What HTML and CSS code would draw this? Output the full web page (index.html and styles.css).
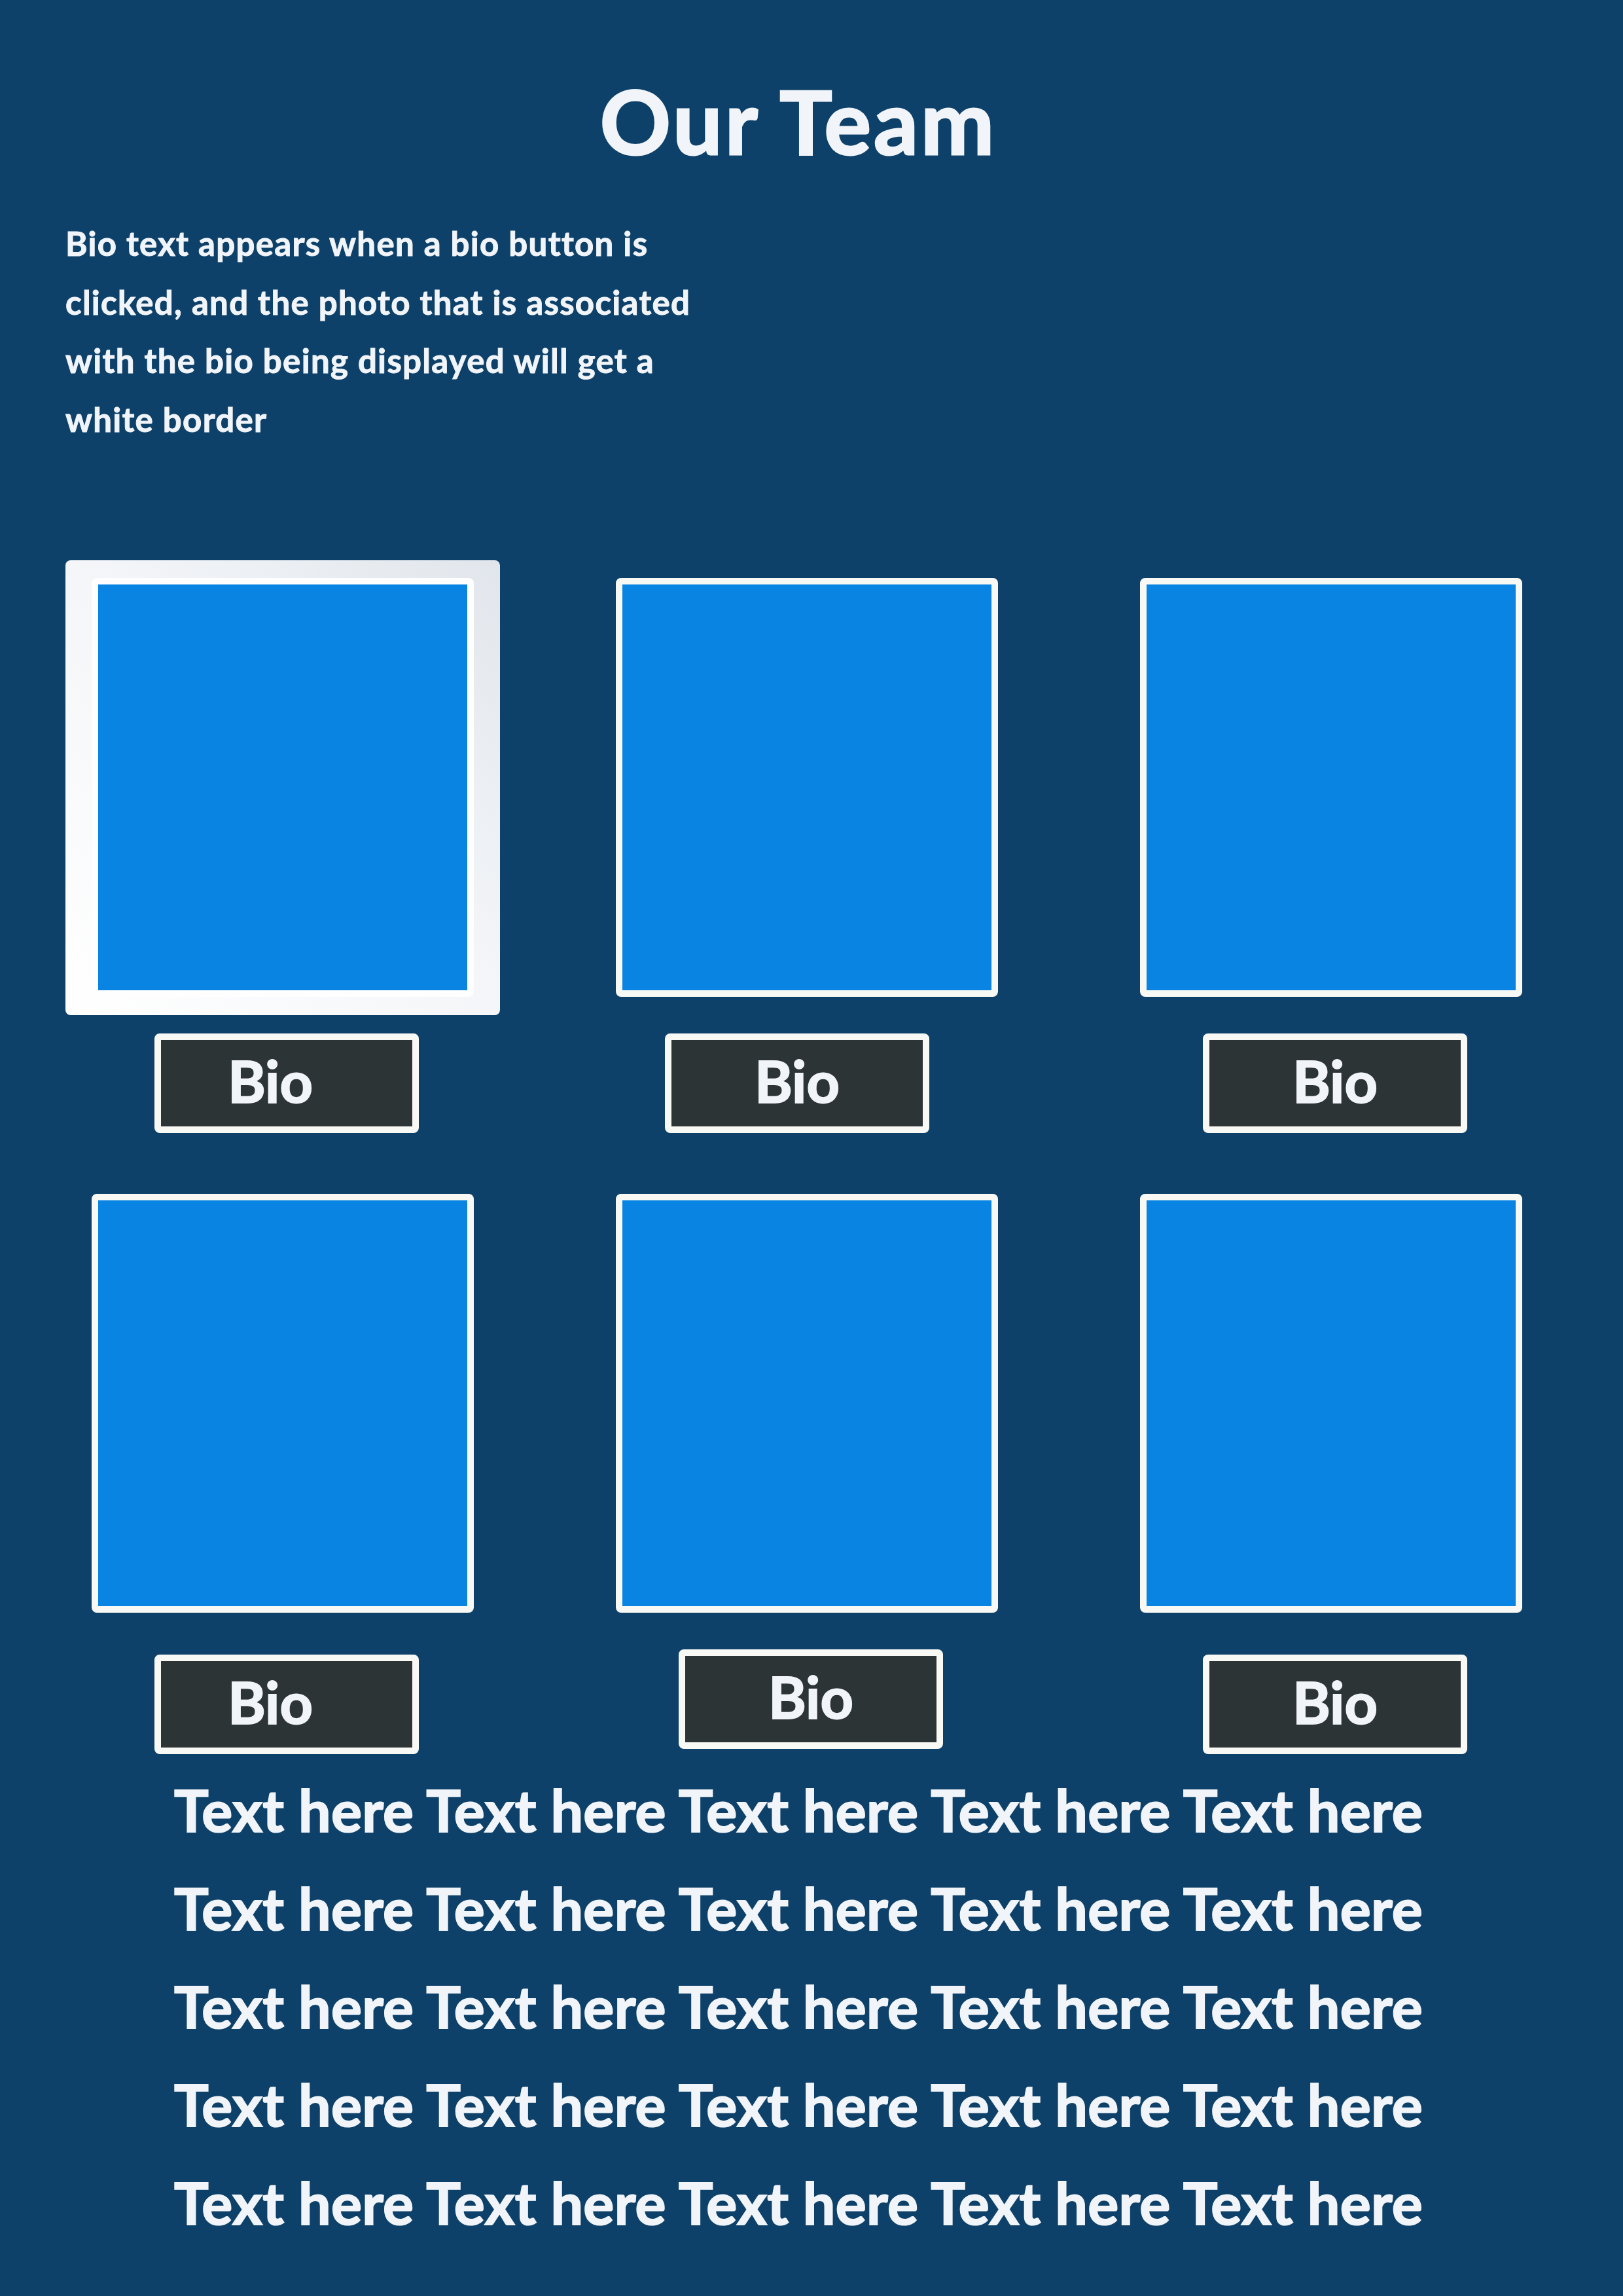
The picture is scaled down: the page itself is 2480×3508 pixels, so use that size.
FILE: index.html
```html
<!DOCTYPE html>
<html lang="en">
<head>
<meta charset="utf-8">
<title>Our Team</title>
<link rel="stylesheet" href="styles.css">
</head>
<body>
<main class="page">
  <h1 class="title">Our Team</h1>
  <p class="intro">Bio text appears when a bio button is<br>clicked, and the photo that is associated<br>with the bio being displayed will get a<br>white border</p>

  <section class="team">
    <div class="member is-active">
      <div class="frame"><div class="photo"></div></div>
      <button class="bio-btn">Bio</button>
    </div>
    <div class="member">
      <div class="frame"><div class="photo"></div></div>
      <button class="bio-btn bio-btn--shift">Bio</button>
    </div>
    <div class="member">
      <div class="frame"><div class="photo"></div></div>
      <button class="bio-btn">Bio</button>
    </div>
    <div class="member">
      <div class="frame"><div class="photo"></div></div>
      <button class="bio-btn bio-btn--low">Bio</button>
    </div>
    <div class="member">
      <div class="frame"><div class="photo"></div></div>
      <button class="bio-btn">Bio</button>
    </div>
    <div class="member">
      <div class="frame"><div class="photo"></div></div>
      <button class="bio-btn bio-btn--low">Bio</button>
    </div>
  </section>

  <div class="bio-text">
    <p>Text here Text here Text here Text here Text here</p>
    <p>Text here Text here Text here Text here Text here</p>
    <p>Text here Text here Text here Text here Text here</p>
    <p>Text here Text here Text here Text here Text here</p>
    <p>Text here Text here Text here Text here Text here</p>
  </div>
</main>
</body>
</html>
```
FILE: styles.css
```css
html, body {
  margin: 0;
  padding: 0;
}

body {
  background: #0e4169;
  color: #f1f5f9;
  font-family: Lato, "Noto Sans", "Liberation Sans", sans-serif;
}

.page {
  min-height: 3508px;
  box-sizing: border-box;
  padding: 105px 40px 0 0;
}

.title {
  margin: 0;
  text-align: center;
  font-size: 134px;
  line-height: 160px;
  font-weight: 700;
  letter-spacing: 4px;
  -webkit-text-stroke: 3px currentColor;
}

.intro {
  margin: 62px 0 0 100px;
  font-size: 51px;
  line-height: 89.5px;
  font-weight: 700;
  letter-spacing: 1.3px;
  -webkit-text-stroke: 1px currentColor;
}

.team {
  display: grid;
  grid-template-columns: repeat(3, 664px);
  column-gap: 137px;
  row-gap: 66px;
  margin: 171px 0 0 100px;
}

.member {
  display: flex;
  flex-direction: column;
  align-items: center;
}

.frame {
  width: 664px;
  height: 695px;
  box-sizing: border-box;
  padding: 27px 40px 28px;
  border-radius: 8px;
}

.member.is-active .frame {
  background: linear-gradient(to bottom left, #e1e6ec 0%, #f3f5f8 45%, #ffffff 100%);
}

.photo {
  width: 584px;
  height: 640px;
  box-sizing: border-box;
  border: 10px solid #f8f9f5;
  border-radius: 8px;
  background: #0984e3;
}

.member.is-active .photo {
  border-color: #fdfefd;
}

.bio-btn {
  margin: 28px 0 0 12px;
  width: 404px;
  height: 152px;
  box-sizing: border-box;
  padding: 0 0 8px;
  border: 10px solid #f8f9f5;
  border-radius: 8px;
  background: #2d3436;
  color: #f1f5f9;
  font-family: Lato, "Noto Sans", "Liberation Sans", sans-serif;
  font-size: 88px;
  font-weight: 700;
  line-height: 1;
  -webkit-text-stroke: 2px currentColor;
  cursor: pointer;
}

.member:nth-child(3n+1) .bio-btn {
  padding-right: 50px;
}

.bio-btn--shift {
  margin-left: -30px;
}

.bio-btn--low {
  margin-top: 36px;
}

.bio-text {
  margin-top: 10px;
  text-align: center;
  font-size: 88px;
  line-height: 150px;
  font-weight: 700;
  letter-spacing: 0.3px;
  -webkit-text-stroke: 2px currentColor;
}

.bio-text p {
  margin: 0;
}
```
